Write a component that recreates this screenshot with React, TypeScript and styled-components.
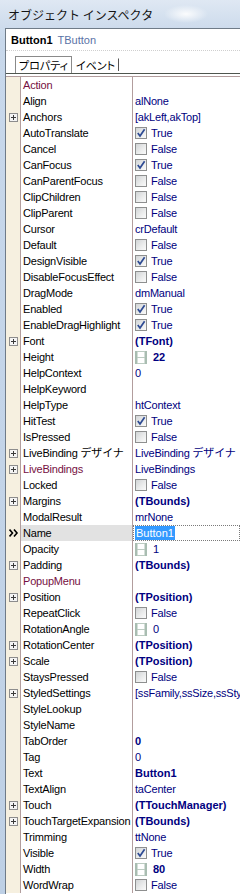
import React from 'react';
import styled, { createGlobalStyle } from 'styled-components';

const GlobalStyle = createGlobalStyle`
  html, body {
    margin: 0;
    padding: 0;
    background: #c9d8ea;
  }
  body {
    font-family: 'Liberation Sans', Arial, sans-serif;
  }
`;

const Window = styled.div`
  width: 240px;
  height: 894px;
  display: flex;
  flex-direction: column;
  overflow: hidden;
  background: linear-gradient(180deg, #dce7f3 0px, #c8d8eb 40px, #bed0e5 100%);
`;

const TitleBar = styled.div`
  height: 28px;
  flex: none;
  display: flex;
  align-items: center;
  padding-left: 8px;
  font-family: 'Noto Sans CJK JP', sans-serif;
  font-size: 12px;
  color: #151515;
  background:
    radial-gradient(ellipse 22px 9px at 186px 14px, rgba(255, 255, 255, 0.9), rgba(255, 255, 255, 0)),
    linear-gradient(180deg, #dfe8f3, #cddbec);
`;

const Frame = styled.div`
  flex: 1;
  display: flex;
  padding-left: 5px;
  min-height: 0;
`;

const Panel = styled.div`
  flex: 1;
  display: flex;
  flex-direction: column;
  background: #fff;
  border-left: 1px solid #6f7b88;
  border-top: 1px solid #6f7b88;
  min-width: 0;
`;

const ObjectHeader = styled.div`
  height: 21px;
  flex: none;
  display: flex;
  align-items: center;
  gap: 5px;
  padding-left: 5px;
  border-bottom: 1px dotted #cfcfcf;
  font-size: 11px;
`;

const ObjectName = styled.span`
  font-weight: bold;
  color: #000;
`;

const ObjectType = styled.span`
  color: #5a72a6;
`;

const TabStrip = styled.div`
  height: 22px;
  flex: none;
  display: flex;
  align-items: flex-end;
  padding-left: 9px;
  border-bottom: 1px solid #4f564f;
`;

const Tab = styled.div<{ $active?: boolean }>`
  height: 16px;
  display: flex;
  align-items: center;
  padding: 0 3px;
  font-family: 'Noto Sans CJK JP', sans-serif;
  font-feature-settings: 'palt';
  font-size: 11px;
  color: #000;
  background: #fff;
  border: 1px solid ${(p) => (p.$active ? '#8a8a8a' : 'transparent')};
  border-bottom: none;
  ${(p) => (!p.$active ? 'border-right: 1px solid #555; height: 12px; margin-bottom: 2px;' : '')}
`;

const Grid = styled.div`
  margin-top: 2px;
  border-top: 1px solid #b29d9d;
  display: flex;
  flex-direction: column;
`;

const Row = styled.div`
  height: 16px;
  display: grid;
  grid-template-columns: 15px 112px 1fr;
  font-size: 11px;
  line-height: 16px;
`;

const Gutter = styled.div`
  background: #f6f0e0;
  border-right: 1px solid #b29d9d;
  display: flex;
  align-items: center;
  padding-left: 3px;
`;

const NameCell = styled.div<{ $ref?: boolean; $selected?: boolean }>`
  border-right: 1px solid #b29d9d;
  padding-left: 2px;
  white-space: nowrap;
  overflow: hidden;
  letter-spacing: -0.2px;
  font-family: 'Liberation Sans', 'Noto Sans CJK JP', sans-serif;
  color: ${(p) => (p.$ref ? '#76103f' : '#000')};
  background: ${(p) => (p.$selected ? '#e2e2e2' : 'transparent')};
`;

const ValueCell = styled.div<{ $selected?: boolean }>`
  display: flex;
  align-items: center;
  padding-left: 2px;
  white-space: nowrap;
  overflow: hidden;
  color: #000080;
  font-family: 'Liberation Sans', 'Noto Sans CJK JP', sans-serif;
  ${(p) => (p.$selected ? 'outline: 1px dotted #7a7a7a; outline-offset: -1px;' : '')}
`;

const ValueText = styled.span<{ $bold?: boolean }>`
  font-weight: ${(p) => (p.$bold ? 'bold' : 'normal')};
  letter-spacing: ${(p) => (p.$bold ? '0' : '-0.2px')};
`;

const SelectedText = styled.span`
  background: #3399ff;
  color: #fff;
  padding: 0 1px;
  line-height: 14px;
`;

const CheckBox = styled.span`
  width: 10px;
  height: 10px;
  flex: none;
  margin-right: 4px;
  border: 1px solid #8e8f8f;
  background: linear-gradient(135deg, #d2d4d6 0%, #eceded 60%, #fafafa 100%);
  display: flex;
  align-items: center;
  justify-content: center;
`;

const SpinIcon = styled.svg`
  flex: none;
  margin-right: 6px;
`;

type Kind = 'text' | 'bool' | 'spin' | 'none';

type Prop = {
  name: string;
  kind: Kind;
  value?: string;
  on?: boolean;
  bold?: boolean;
  expand?: boolean;
  ref?: boolean;
  selected?: boolean;
};

const props: Prop[] = [
  { name: 'Action', kind: 'none', ref: true },
  { name: 'Align', kind: 'text', value: 'alNone' },
  { name: 'Anchors', kind: 'text', value: '[akLeft,akTop]', expand: true },
  { name: 'AutoTranslate', kind: 'bool', on: true },
  { name: 'Cancel', kind: 'bool', on: false },
  { name: 'CanFocus', kind: 'bool', on: true },
  { name: 'CanParentFocus', kind: 'bool', on: false },
  { name: 'ClipChildren', kind: 'bool', on: false },
  { name: 'ClipParent', kind: 'bool', on: false },
  { name: 'Cursor', kind: 'text', value: 'crDefault' },
  { name: 'Default', kind: 'bool', on: false },
  { name: 'DesignVisible', kind: 'bool', on: true },
  { name: 'DisableFocusEffect', kind: 'bool', on: false },
  { name: 'DragMode', kind: 'text', value: 'dmManual' },
  { name: 'Enabled', kind: 'bool', on: true },
  { name: 'EnableDragHighlight', kind: 'bool', on: true },
  { name: 'Font', kind: 'text', value: '(TFont)', bold: true, expand: true },
  { name: 'Height', kind: 'spin', value: '22', bold: true },
  { name: 'HelpContext', kind: 'text', value: '0' },
  { name: 'HelpKeyword', kind: 'none' },
  { name: 'HelpType', kind: 'text', value: 'htContext' },
  { name: 'HitTest', kind: 'bool', on: true },
  { name: 'IsPressed', kind: 'bool', on: false },
  { name: 'LiveBinding デザイナ', kind: 'text', value: 'LiveBinding デザイナ', expand: true },
  { name: 'LiveBindings', kind: 'text', value: 'LiveBindings', expand: true, ref: true },
  { name: 'Locked', kind: 'bool', on: false },
  { name: 'Margins', kind: 'text', value: '(TBounds)', bold: true, expand: true },
  { name: 'ModalResult', kind: 'text', value: 'mrNone' },
  { name: 'Name', kind: 'text', value: 'Button1', selected: true },
  { name: 'Opacity', kind: 'spin', value: '1' },
  { name: 'Padding', kind: 'text', value: '(TBounds)', bold: true, expand: true },
  { name: 'PopupMenu', kind: 'none', ref: true },
  { name: 'Position', kind: 'text', value: '(TPosition)', bold: true, expand: true },
  { name: 'RepeatClick', kind: 'bool', on: false },
  { name: 'RotationAngle', kind: 'spin', value: '0' },
  { name: 'RotationCenter', kind: 'text', value: '(TPosition)', bold: true, expand: true },
  { name: 'Scale', kind: 'text', value: '(TPosition)', bold: true, expand: true },
  { name: 'StaysPressed', kind: 'bool', on: false },
  { name: 'StyledSettings', kind: 'text', value: '[ssFamily,ssSize,ssStyle,ssFontColor]', expand: true },
  { name: 'StyleLookup', kind: 'none' },
  { name: 'StyleName', kind: 'none' },
  { name: 'TabOrder', kind: 'text', value: '0', bold: true },
  { name: 'Tag', kind: 'text', value: '0' },
  { name: 'Text', kind: 'text', value: 'Button1', bold: true },
  { name: 'TextAlign', kind: 'text', value: 'taCenter' },
  { name: 'Touch', kind: 'text', value: '(TTouchManager)', bold: true, expand: true },
  { name: 'TouchTargetExpansion', kind: 'text', value: '(TBounds)', bold: true, expand: true },
  { name: 'Trimming', kind: 'text', value: 'ttNone' },
  { name: 'Visible', kind: 'bool', on: true },
  { name: 'Width', kind: 'spin', value: '80', bold: true },
  { name: 'WordWrap', kind: 'bool', on: false },
];

const PlusBox = () => (
  <svg width="9" height="9" viewBox="0 0 9 9">
    <rect x="0.5" y="0.5" width="8" height="8" fill="#f4f4f4" stroke="#8d8d8d" />
    <path d="M2 4.5h5M4.5 2v5" stroke="#3a3a3a" strokeWidth="1" />
  </svg>
);

const Chevrons = () => (
  <svg width="10" height="8" viewBox="0 0 10 8">
    <path d="M0.5 0.5L3.5 4L0.5 7.5M5 0.5L8 4L5 7.5" fill="none" stroke="#000" strokeWidth="1.6" />
  </svg>
);

const Check = () => (
  <svg width="10" height="10" viewBox="0 0 10 10">
    <path d="M1.8 5L4 8L8.6 1.2" fill="none" stroke="#2e4b94" strokeWidth="1.7" />
  </svg>
);

const Spin = () => (
  <SpinIcon width="12" height="13" viewBox="0 0 12 13">
    <rect x="0" y="0" width="2.5" height="13" fill="#a9bdb1" />
    <rect x="9.5" y="0" width="2.5" height="13" fill="#a9bdb1" />
    <rect x="2" y="0" width="8" height="1" fill="#bcccc2" />
    <rect x="2" y="6" width="8" height="1" fill="#bcccc2" />
    <rect x="2" y="12" width="8" height="1" fill="#bcccc2" />
  </SpinIcon>
);

const PropValue = ({ p }: { p: Prop }) => {
  if (p.kind === 'bool') {
    return (
      <>
        <CheckBox>{p.on && <Check />}</CheckBox>
        <ValueText>{p.on ? 'True' : 'False'}</ValueText>
      </>
    );
  }
  if (p.kind === 'spin') {
    return (
      <>
        <Spin />
        <ValueText $bold={p.bold}>{p.value}</ValueText>
      </>
    );
  }
  if (p.kind === 'text') {
    if (p.selected) return <SelectedText>{p.value}</SelectedText>;
    return <ValueText $bold={p.bold}>{p.value}</ValueText>;
  }
  return null;
};

export default function App() {
  return (
    <>
      <GlobalStyle />
      <Window>
        <TitleBar>オブジェクト インスペクタ</TitleBar>
        <Frame>
          <Panel>
            <ObjectHeader>
              <ObjectName>Button1</ObjectName>
              <ObjectType>TButton</ObjectType>
            </ObjectHeader>
            <TabStrip>
              <Tab $active>プロパティ</Tab>
              <Tab>イベント</Tab>
            </TabStrip>
            <Grid>
              {props.map((p) => (
                <Row key={p.name}>
                  <Gutter>{p.selected ? <Chevrons /> : p.expand ? <PlusBox /> : null}</Gutter>
                  <NameCell $ref={p.ref} $selected={p.selected}>
                    {p.name}
                  </NameCell>
                  <ValueCell $selected={p.selected}>
                    <PropValue p={p} />
                  </ValueCell>
                </Row>
              ))}
            </Grid>
          </Panel>
        </Frame>
      </Window>
    </>
  );
}
